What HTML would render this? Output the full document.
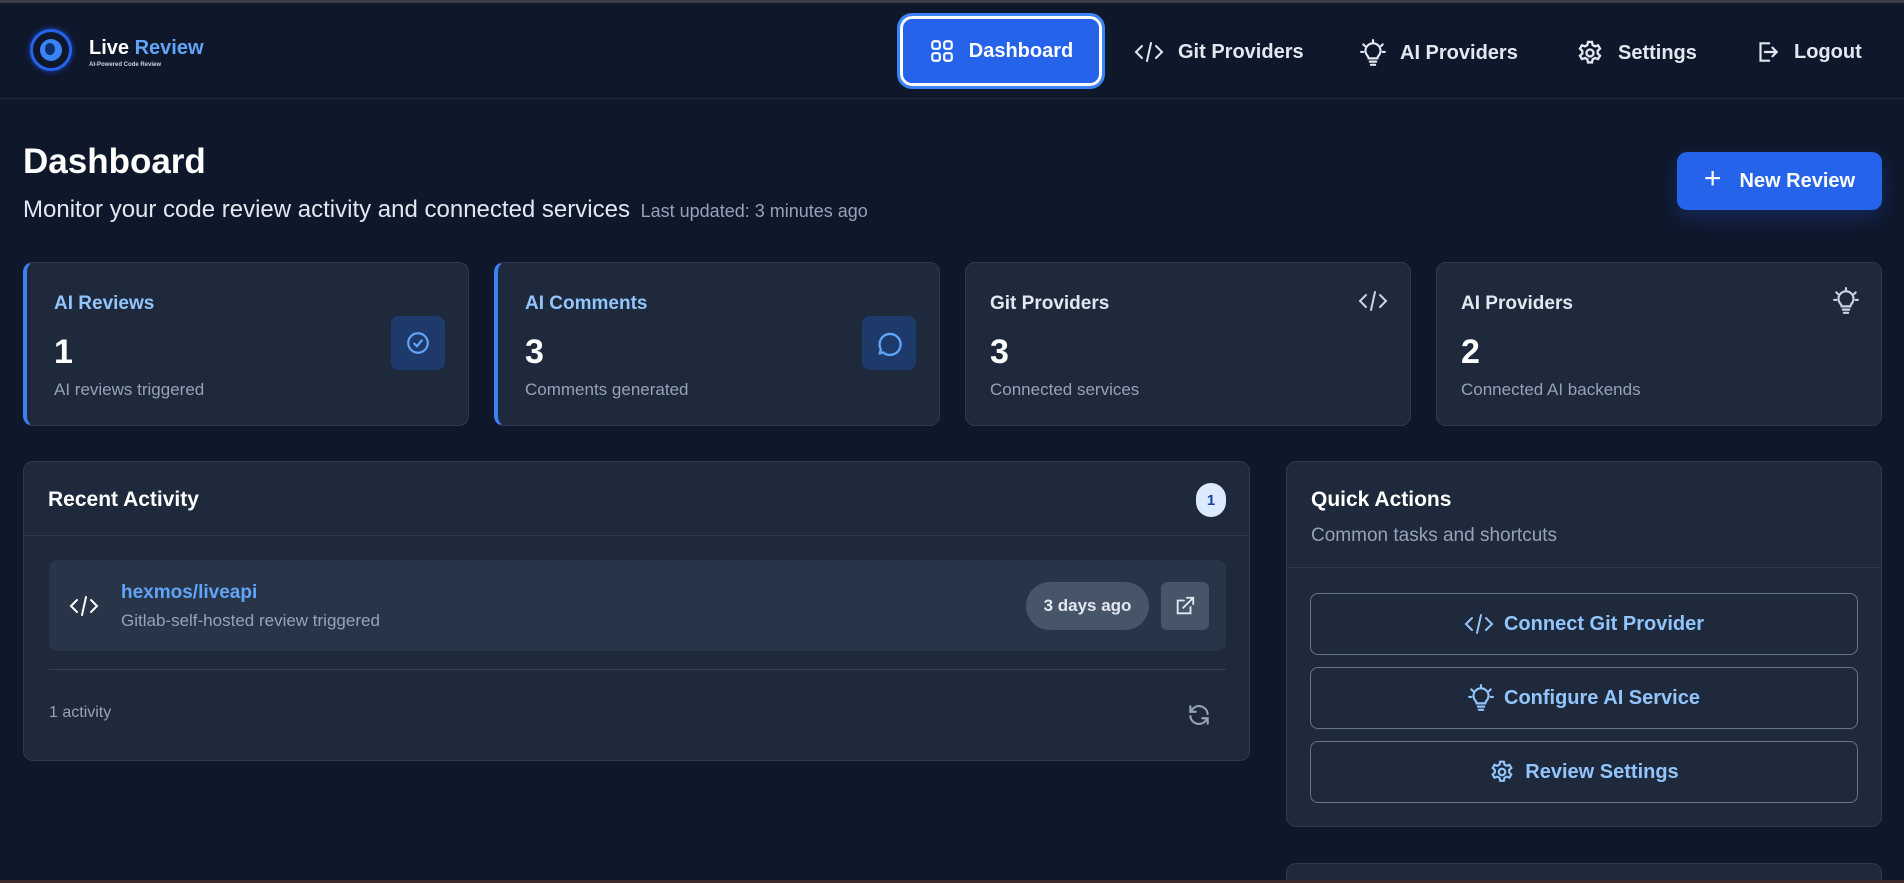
<!DOCTYPE html>
<html style="width:1904px;height:883px;overflow:hidden"><head><meta charset="utf-8"><style>
*{box-sizing:border-box;margin:0;padding:0}
body{width:1904px;height:883px;overflow:hidden;background:#0f172a;font-family:"Liberation Sans",sans-serif;color:#f1f5f9;position:relative}
.abs{position:absolute}
.top{left:0;top:0;width:1904px;height:3px;background:#3a3d44}
.hdr{left:0;top:3px;width:1904px;height:96px;border-bottom:1px solid #1f2a3c;background:#0f172a}
.nav{display:flex;align-items:center;gap:8px;font-size:20px;font-weight:600;color:#e2e8f0}
svg{display:block}
.card{background:#1e293b;border:1px solid #2c3a50;border-radius:10px}
.stat .lbl{position:absolute;left:27px;top:30px;font-size:19px;font-weight:600}
.stat .num{position:absolute;left:27px;top:70px;font-size:34px;font-weight:700;color:#fff}
.stat .desc{position:absolute;left:27px;top:117px;font-size:17px;color:#94a3b8}
.ibox{position:absolute;width:54px;height:54px;border-radius:8px;background:#1e3a6a;display:flex;align-items:center;justify-content:center;top:53px;right:23px}
.qbtn{position:absolute;left:23px;width:548px;height:62px;border:1px solid #64748b;border-radius:8px;display:flex;align-items:center;justify-content:center;gap:10px;color:#93c5fd;font-size:20px;font-weight:600}
</style></head><body>
<div class="abs top"></div>
<div class="abs hdr"></div>
<div class="abs" style="left:30px;top:29px;width:42px;height:42px;border-radius:50%;border:3px solid #2563eb;box-shadow:0 0 6px #1d4ed8"></div>
<div class="abs" style="left:40px;top:39px;width:22px;height:22px;border-radius:50%;background:#3b82f6"></div>
<div class="abs" style="left:45px;top:43px;width:10px;height:12px;border-radius:50%;background:#0f2d66"></div>
<div class="abs" style="left:89px;top:37px;font-size:20px;font-weight:700;color:#fff">Live <span style="color:#60a5fa">Review</span></div>
<div class="abs" style="left:89px;top:62px;font-size:6px;font-weight:700;color:#cbd5e1">AI-Powered Code Review</div>
<div class="abs nav" style="left:900px;top:16px;width:202px;height:70px;background:#2563eb;border:3px solid #fff;outline:3px solid #3b82f6;border-radius:12px;justify-content:center;color:#fff;gap:14px">
<svg width="26" height="26" viewBox="0 0 24 24" fill="none" stroke="#fff" stroke-width="2"><rect x="3" y="3" width="7" height="7" rx="2"/><rect x="14" y="3" width="7" height="7" rx="2"/><rect x="3" y="14" width="7" height="7" rx="2"/><rect x="14" y="14" width="7" height="7" rx="2"/></svg>Dashboard</div>
<div class="abs nav" style="left:1134px;top:40px;gap:14px"><svg width="30" height="24" viewBox="0 0 30 24" fill="none" stroke="#e2e8f0" stroke-width="2" stroke-linecap="round"><path d="M8 6 2 12l6 6M22 6l6 6-6 6M17 3l-4 18"/></svg>Git Providers</div>
<div class="abs nav" style="left:1360px;top:39px;gap:14px"><svg width="26" height="28" viewBox="0 0 24 26" fill="none" stroke="#e2e8f0" stroke-width="2" stroke-linecap="round"><path d="M12 1v2M3 5l1.5 1.5M21 5l-1.5 1.5M1 12h2M21 12h2M8 18c0-2-3-3.5-3-7a7 7 0 0 1 14 0c0 3.5-3 5-3 7zM9 21h6M10 24h4"/></svg>AI Providers</div>
<div class="abs nav" style="left:1576px;top:39px;gap:14px"><svg width="28" height="28" viewBox="0 0 24 24" fill="none" stroke="#e2e8f0" stroke-width="2"><path d="M10.3 2.5h3.4l.6 2.7 2 1.1 2.6-.9 1.7 2.9-2 1.8v2.4l2 1.8-1.7 2.9-2.6-.9-2 1.1-.6 2.7h-3.4l-.6-2.7-2-1.1-2.6.9-1.7-2.9 2-1.8v-2.4l-2-1.8 1.7-2.9 2.6.9 2-1.1z"/><circle cx="12" cy="12" r="3"/></svg>Settings</div>
<div class="abs nav" style="left:1754px;top:39px;gap:14px"><svg width="26" height="26" viewBox="0 0 24 24" fill="none" stroke="#e2e8f0" stroke-width="2" stroke-linecap="round"><path d="M14 4H6v16h8M10 12h11M17 8l4 4-4 4"/></svg>Logout</div>
<div class="abs" style="left:23px;top:142px;font-size:35px;font-weight:700;color:#fff">Dashboard</div>
<div class="abs" style="left:23px;top:196px;font-size:24px;color:#e2e8f0;white-space:nowrap">Monitor your code review activity and connected services <span style="font-size:18px;color:#94a3b8;margin-left:4px">Last updated: 3 minutes ago</span></div>
<div class="abs" style="left:1677px;top:152px;width:205px;height:58px;background:#2563eb;border-radius:10px;display:flex;align-items:center;justify-content:center;gap:18px;font-size:20px;font-weight:600;color:#fff;box-shadow:0 8px 20px rgba(37,99,235,.25)"><span style="font-size:30px;font-weight:400;margin-top:-4px">+</span>New Review</div>
<div class="abs card stat" style="left:23px;top:262px;width:446px;height:164px;border-left:4px solid #3b82f6">
<div class="lbl" style="color:#93c5fd">AI Reviews</div><div class="num">1</div><div class="desc">AI reviews triggered</div>
<div class="ibox"><svg width="26" height="26" viewBox="0 0 24 24" fill="none" stroke="#60a5fa" stroke-width="2"><circle cx="12" cy="12" r="9"/><path d="M8 12l3 3 5-6"/></svg></div></div>
<div class="abs card stat" style="left:494px;top:262px;width:446px;height:164px;border-left:4px solid #3b82f6">
<div class="lbl" style="color:#93c5fd">AI Comments</div><div class="num">3</div><div class="desc">Comments generated</div>
<div class="ibox"><svg width="28" height="28" viewBox="0 0 24 24" fill="none" stroke="#60a5fa" stroke-width="2" stroke-linejoin="round"><path d="M7 20l-3 1 1-3.5A9 9 0 1 1 7 20z"/></svg></div></div>
<div class="abs card stat" style="left:965px;top:262px;width:446px;height:164px">
<div class="lbl" style="left:24px;color:#e2e8f0">Git Providers</div><div class="num" style="left:24px">3</div><div class="desc" style="left:24px">Connected services</div>
<svg class="abs" style="right:22px;top:25px" width="30" height="26" viewBox="0 0 30 24" fill="none" stroke="#cbd5e1" stroke-width="2" stroke-linecap="round"><path d="M8 6 2 12l6 6M22 6l6 6-6 6M17 3l-4 18"/></svg></div>
<div class="abs card stat" style="left:1436px;top:262px;width:446px;height:164px">
<div class="lbl" style="left:24px;color:#e2e8f0">AI Providers</div><div class="num" style="left:24px">2</div><div class="desc" style="left:24px">Connected AI backends</div>
<svg class="abs" style="right:22px;top:24px" width="26" height="28" viewBox="0 0 24 26" fill="none" stroke="#cbd5e1" stroke-width="2" stroke-linecap="round"><path d="M12 1v2M3 5l1.5 1.5M21 5l-1.5 1.5M1 12h2M21 12h2M8 18c0-2-3-3.5-3-7a7 7 0 0 1 14 0c0 3.5-3 5-3 7zM9 21h6M10 24h4"/></svg></div>
<div class="abs card" style="left:23px;top:461px;width:1227px;height:300px">
<div class="abs" style="left:24px;top:26px;font-size:21px;font-weight:700;color:#fff">Recent Activity</div>
<div class="abs" style="left:1172px;top:21px;width:30px;height:34px;border-radius:15px;background:#dbeafe;color:#1e40af;font-size:15px;font-weight:700;display:flex;align-items:center;justify-content:center">1</div>
<div class="abs" style="left:0;top:73px;width:100%;height:1px;background:#2c3a50"></div>
<div class="abs" style="left:25px;top:98px;width:1177px;height:91px;background:#283548;border-radius:8px">
<svg class="abs" style="left:20px;top:34px" width="30" height="24" viewBox="0 0 30 24" fill="none" stroke="#fff" stroke-width="2" stroke-linecap="round"><path d="M8 6 2 12l6 6M22 6l6 6-6 6M17 3l-4 18"/></svg>
<div class="abs" style="left:72px;top:22px;font-size:19px;font-weight:700;color:#60a5fa">hexmos/liveapi</div>
<div class="abs" style="left:72px;top:51px;font-size:17px;color:#94a3b8">Gitlab-self-hosted review triggered</div>
<div class="abs" style="left:977px;top:22px;width:123px;height:48px;border-radius:24px;background:#475569;color:#e2e8f0;font-size:17px;font-weight:600;display:flex;align-items:center;justify-content:center">3 days ago</div>
<div class="abs" style="left:1112px;top:22px;width:48px;height:48px;border-radius:6px;background:#475569;display:flex;align-items:center;justify-content:center"><svg width="22" height="22" viewBox="0 0 24 24" fill="none" stroke="#e2e8f0" stroke-width="2" stroke-linecap="round"><path d="M18 13v7H4V6h7M14 3h7v7M21 3 10 14"/></svg></div>
</div>
<div class="abs" style="left:25px;top:207px;width:1177px;height:1px;background:#334155"></div>
<div class="abs" style="left:25px;top:242px;font-size:16px;color:#94a3b8">1 activity</div>
<svg class="abs" style="left:1162px;top:240px" width="26" height="26" viewBox="0 0 24 24" fill="none" stroke="#94a3b8" stroke-width="2" stroke-linecap="round"><path d="M20 11a8 8 0 0 0-14-4.5L4 9M4 4v5h5M4 13a8 8 0 0 0 14 4.5L20 15M20 20v-5h-5"/></svg>
</div>
<div class="abs card" style="left:1286px;top:461px;width:596px;height:366px">
<div class="abs" style="left:24px;top:26px;font-size:21px;font-weight:700;color:#fff">Quick Actions</div>
<div class="abs" style="left:24px;top:63px;font-size:19px;color:#94a3b8">Common tasks and shortcuts</div>
<div class="abs" style="left:0;top:105px;width:100%;height:1px;background:#2c3a50"></div>
<div class="qbtn" style="top:131px"><svg width="30" height="24" viewBox="0 0 30 24" fill="none" stroke="#93c5fd" stroke-width="2" stroke-linecap="round"><path d="M8 6 2 12l6 6M22 6l6 6-6 6M17 3l-4 18"/></svg>Connect Git Provider</div>
<div class="qbtn" style="top:205px"><svg width="26" height="28" viewBox="0 0 24 26" fill="none" stroke="#93c5fd" stroke-width="2" stroke-linecap="round"><path d="M12 1v2M3 5l1.5 1.5M21 5l-1.5 1.5M1 12h2M21 12h2M8 18c0-2-3-3.5-3-7a7 7 0 0 1 14 0c0 3.5-3 5-3 7zM9 21h6M10 24h4"/></svg>Configure AI Service</div>
<div class="qbtn" style="top:279px"><svg width="26" height="26" viewBox="0 0 24 24" fill="none" stroke="#93c5fd" stroke-width="2"><path d="M10.3 2.5h3.4l.6 2.7 2 1.1 2.6-.9 1.7 2.9-2 1.8v2.4l2 1.8-1.7 2.9-2.6-.9-2 1.1-.6 2.7h-3.4l-.6-2.7-2-1.1-2.6.9-1.7-2.9 2-1.8v-2.4l-2-1.8 1.7-2.9 2.6.9 2-1.1z"/><circle cx="12" cy="12" r="3"/></svg>Review Settings</div>
</div>
<div class="abs" style="left:1286px;top:863px;width:596px;height:17px;background:#1e293b;border:1px solid #2c3a50;border-bottom:none;border-radius:10px 10px 0 0"></div>
<div class="abs" style="left:0;top:880px;width:1904px;height:3px;background:#3d2a2a"></div>
</body></html>
